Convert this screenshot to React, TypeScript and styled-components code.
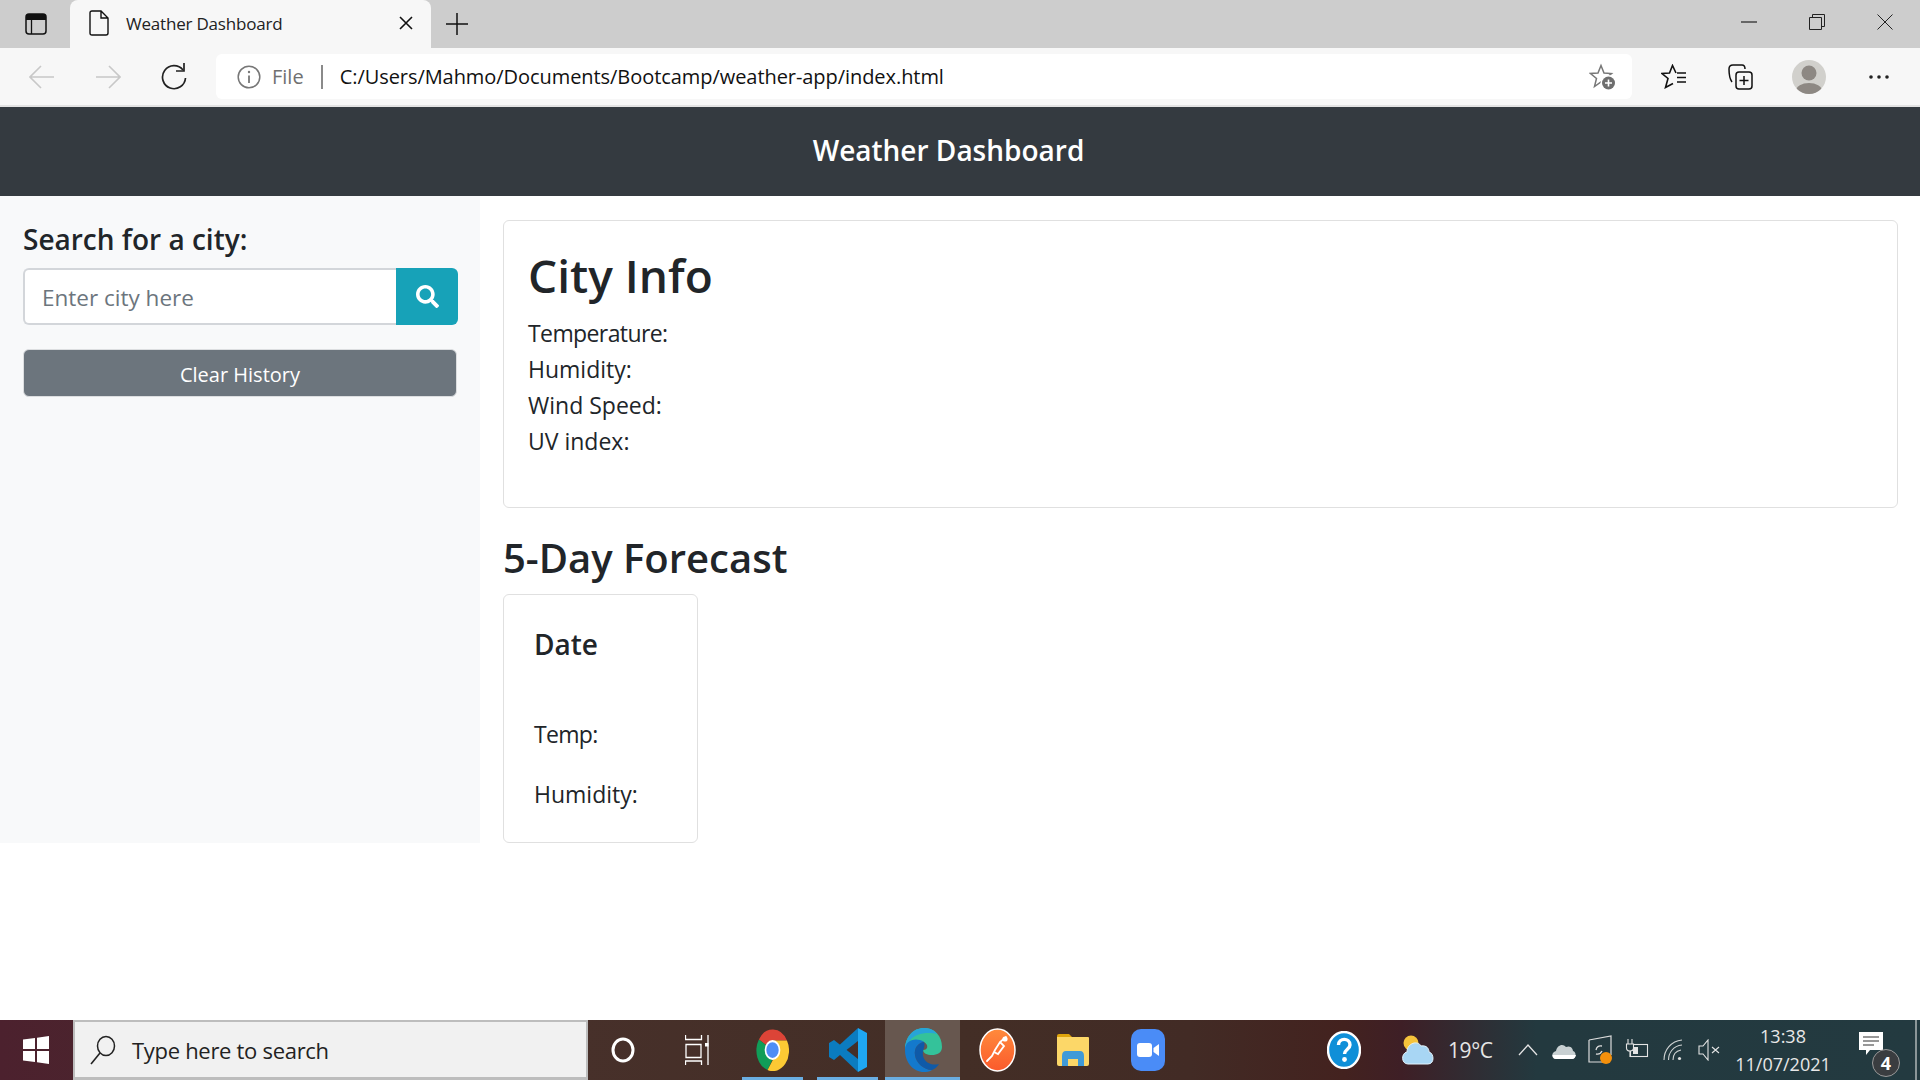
import React from "react";
import styled, { createGlobalStyle } from "styled-components";
import { FaSearch } from "react-icons/fa";

const GlobalStyle = createGlobalStyle`
    html, body {
        margin: 0;
        padding: 0;
        height: 100%;
        background: #fff;
    }
    * {
        box-sizing: border-box;
    }
`

const BODY_FONT = `"Open Sans", "Noto Sans", "Liberation Sans", sans-serif`;

const Page = styled.div`
    height: 100vh;
    display: flex;
    flex-direction: column;
    font-family: ${BODY_FONT};
    color: #212529;
    overflow: hidden;
`

const TabStrip = styled.div`
    height: 48px;
    background: #cdcdcd;
    display: flex;
    align-items: stretch;
`

const StripButton = styled.div<{ $width: number }>`
    width: ${p => p.$width}px;
    display: flex;
    align-items: center;
    justify-content: center;
    flex: none;
    padding-left: 2px;
`

const Tab = styled.div`
    width: 361px;
    background: #f7f7f7;
    border-radius: 8px 8px 0 0;
    display: flex;
    align-items: center;
    padding: 0 18px 2px 19px;
    font-size: 17px;
    color: #222;
`

const TabTitle = styled.span`
    margin-left: 17px;
    flex: 1;
    letter-spacing: -0.2px;
`

const WindowControls = styled.div`
    margin-left: auto;
    display: flex;
    height: 100%;
    padding-right: 1px;
`

const WindowButton = styled.div`
    width: 68px;
    display: flex;
    align-items: center;
    justify-content: center;
    padding-bottom: 5px;
`

const Toolbar = styled.div`
    height: 59px;
    background: #f7f7f7;
    border-bottom: 2px solid #e3e3e3;
    display: flex;
    align-items: center;
    padding: 0 8px 0 9px;
`

const NavButton = styled.div`
    width: 66px;
    display: flex;
    align-items: center;
    justify-content: center;
    flex: none;
`

const AddressBar = styled.div`
    flex: 1;
    height: 45px;
    margin: 0 8px 0 9px;
    background: #fff;
    border-radius: 6px;
    display: flex;
    align-items: center;
    padding: 0 15px 0 21px;
    font-size: 20px;
    color: #111;
`

const FileLabel = styled.span`
    color: #707070;
    margin-left: 11px;
`

const AddressDivider = styled.span`
    width: 2px;
    height: 24px;
    background: #8a8a8a;
    margin: 0 17px 0 17px;
`

const AddressUrl = styled.span`
    flex: 1;
    letter-spacing: -0.06px;
`

const ToolButton = styled.div<{ $width: number }>`
    width: ${p => p.$width}px;
    display: flex;
    align-items: center;
    justify-content: center;
    flex: none;
`

const Avatar = styled.div`
    width: 34px;
    height: 34px;
    border-radius: 50%;
    background: #d1d0cc;
    display: flex;
    align-items: center;
    justify-content: center;
    overflow: hidden;
`

const Header = styled.header`
    height: 89px;
    background: #343a40;
    color: #fff;
    display: flex;
    align-items: center;
    justify-content: center;
    font-size: 28px;
    font-weight: 600;
    flex: none;
    padding: 0 23px 3px 0;
`

const Main = styled.main`
    display: flex;
    height: 647px;
    flex: none;
`

const Sidebar = styled.aside`
    width: 480px;
    background: #f8f9fa;
    padding: 24px 22px 0 23px;
    flex: none;
`

const SearchTitle = styled.h2`
    margin: 0 0 10px;
    font-size: 28px;
    line-height: 38px;
    font-weight: 600;
`

const SearchGroup = styled.div`
    display: flex;
    height: 57px;
`

const CityInput = styled.input`
    flex: 1;
    min-width: 0;
    height: 57px;
    border: 2px solid #d3d6da;
    border-right: none;
    border-radius: 6px 0 0 6px;
    padding: 1px 17px 0;
    font-family: ${BODY_FONT};
    font-size: 22.5px;
    color: #212529;
    background: #fff;
    outline: none;
    &::placeholder {
        color: #6c757d;
        opacity: 1;
    }
`

const SearchButton = styled.div`
    width: 62px;
    background: #17a2b8;
    color: #fff;
    border-radius: 0 6px 6px 0;
    display: flex;
    align-items: center;
    justify-content: center;
    font-size: 23px;
`

const ClearButton = styled.div`
    margin-top: 24px;
    height: 48px;
    width: 434px;
    background: #6c757d;
    border: 1.5px solid #dcdee0;
    border-radius: 6px;
    color: #fff;
    display: flex;
    align-items: center;
    justify-content: center;
    font-size: 20px;
    padding-top: 2px;
`

const Content = styled.section`
    flex: 1;
    padding: 24px 22px 0 23px;
    display: flex;
    flex-direction: column;
`

const CityCard = styled.div`
    height: 288px;
    border: 1.5px solid #e0e0e0;
    border-radius: 6px;
    padding: 24px 24px 0;
`

const CityName = styled.h1`
    margin: 0 0 10px;
    font-size: 46px;
    line-height: 60px;
    font-weight: 600;
`

const InfoLine = styled.div<{ $tight?: boolean }>`
    font-size: 23px;
    line-height: 36px;
    letter-spacing: ${p => (p.$tight ? "-0.6px" : "0")};
`

const ForecastTitle = styled.h2`
    margin: 23px 0 9px;
    font-size: 40px;
    line-height: 54px;
    font-weight: 600;
`

const DayCard = styled.div`
    width: 195px;
    height: 249px;
    border: 1.5px solid #e0e0e0;
    border-radius: 6px;
    padding: 31px 30px 0;
`

const DayDate = styled.h4`
    margin: 0 0 54px;
    font-size: 28px;
    line-height: 36px;
    font-weight: 600;
`

const DayLine = styled.div<{ $tight?: boolean }>`
    font-size: 23px;
    line-height: 36px;
    margin-bottom: 24px;
    letter-spacing: ${p => (p.$tight ? "-0.7px" : "0")};
`

const Spacer = styled.div`
    flex: 1;
`

const Taskbar = styled.footer`
    height: 60px;
    flex: none;
    display: flex;
    align-items: stretch;
    color: #fff;
    background: linear-gradient(90deg, #4c212e 0%, #47302a 30%, #432e26 50%, #422b25 62%, #43221f 70%, #3e1f26 73%, #23393f 80%, #233a40 100%);
`

const StartCell = styled.div`
    width: 73px;
    display: flex;
    align-items: center;
    justify-content: center;
    padding-right: 2px;
`

const SearchBox = styled.div`
    width: 515px;
    background: #f1f1f1;
    border: 2px solid #bdbdbd;
    border-bottom-width: 3px;
    color: #222;
    display: flex;
    align-items: center;
    padding: 0 0 0 15px;
    font-size: 22px;
`

const SearchText = styled.span`
    margin-left: 16px;
    letter-spacing: -0.3px;
`

const TaskCell = styled.div<{ $width: number; $active?: boolean; $running?: boolean }>`
    width: ${p => p.$width}px;
    flex: none;
    position: relative;
    display: flex;
    align-items: center;
    justify-content: center;
    background: ${p => (p.$active ? "#67574f" : "transparent")};
    ${p => p.$running && `
        &::after {
            content: "";
            position: absolute;
            left: ${p.$active ? 0 : 7}px;
            right: ${p.$active ? 0 : 7}px;
            bottom: 0;
            height: 3px;
            background: #6aaee2;
        }
    `}
`

const Tray = styled.div`
    margin-left: auto;
    display: flex;
    align-items: stretch;
    padding-right: 17px;
    border-right: 3px solid transparent;
    position: relative;
    &::after {
        content: "";
        position: absolute;
        right: 0;
        top: 0;
        bottom: 0;
        width: 2px;
        background: #8b9698;
    }
`

const WeatherCell = styled.div`
    width: 125px;
    display: flex;
    align-items: center;
    padding-left: 17px;
    font-size: 21px;
    color: #e6e6e6;
`

const TempText = styled.span`
    margin-left: 14px;
    letter-spacing: -0.4px;
`

const Clock = styled.div`
    width: 114px;
    display: flex;
    flex-direction: column;
    align-items: center;
    justify-content: center;
    font-size: 18px;
    line-height: 28px;
    color: #e8e8e8;
`

const NoteBadge = styled.span`
    position: absolute;
    right: 0;
    bottom: 3px;
    width: 28px;
    height: 28px;
    border-radius: 50%;
    background: #3a3d40;
    border: 1.5px solid #9a9a9a;
    color: #fff;
    font-size: 18px;
    font-weight: 700;
    display: flex;
    align-items: center;
    justify-content: center;
`

const NoteCell = styled(TaskCell)`
    justify-content: flex-start;
    padding-left: 19px;
    padding-bottom: 8px;
`

const ChromeLogo = () => (
    <svg width="33" height="42" viewBox="0 0 40 40" preserveAspectRatio="none">
        <path d="M20 20 L3.5 10 A19.5 19.5 0 0 1 37.5 11 L20 11 Z" fill="#dc4437" />
        <path d="M20 20 L3.5 10 A19.5 19.5 0 0 0 14 39 L20 29 Z" fill="#109d58" />
        <path d="M20 11 L37.5 11 A19.5 19.5 0 0 1 14 39 L24 24 Z" fill="#fcc934" />
        <circle cx="20" cy="20" r="9.5" fill="#fff" />
        <circle cx="20" cy="20" r="7.5" fill="#4e8df5" />
    </svg>
)

const VsCodeLogo = () => (
    <svg width="38" height="44" viewBox="0 0 38 44">
        <path d="M0 15 L5 12 L29 31 V44 L11 27 L5 32 L0 29 Z" fill="#0b7cc0" />
        <path d="M29 0 V13 L11 27 L5 22 Z" fill="#0b7cc0" />
        <path d="M29 0 L38 5 V39 L29 44 Z" fill="#1fa7f2" />
    </svg>
)

const EdgeLogo = () => (
    <svg width="38" height="44" viewBox="0 0 38 44">
        <path d="M1 22 C1 9 9 0 20 0 C31 0 38 8 38 19 C38 25 33 27 28 27 C23 27 19 25 19 22 C24 22 25 17 20 14 C12 10 1 14 1 22 Z" fill="#34c29a" />
        <path d="M1 22 C1 9 9 0 20 0 C26 0 30 2 33 6 C26 4 10 4 5 14 Z" fill="#27a4d8" />
        <path d="M1 22 C1 12 12 9 20 14 C14 15 10 20 11 27 C12 35 20 42 28 42 C25 44 22 44 20 44 C9 44 1 34 1 22 Z" fill="#1479cc" />
        <path d="M20 14 C14 15 10 20 11 27 C12 35 20 42 28 42 C31 41 33 39 35 36 C28 38 21 35 19 28 C18 22 22 18 20 14 Z" fill="#0f5aa8" />
    </svg>
)

const PostmanLogo = () => (
    <svg width="37" height="44" viewBox="0 0 37 44">
        <defs>
            <linearGradient id="pm" x1="0" y1="0" x2="0" y2="1">
                <stop offset="0" stopColor="#ff8a3c" />
                <stop offset="1" stopColor="#fb5a2c" />
            </linearGradient>
        </defs>
        <ellipse cx="18.5" cy="22" rx="17.5" ry="21" fill="url(#pm)" stroke="#fff" strokeWidth="1.5" />
        <path d="M27 9 L21 14 L16 22 L13 28 L8 33 M21 14 L25 18 L19 26 L15 24" fill="none" stroke="#fff" strokeWidth="1.8" strokeLinecap="round" />
        <circle cx="26" cy="11" r="2.6" fill="#fff" />
    </svg>
)

const FolderIcon = () => (
    <svg width="32" height="32" viewBox="0 0 32 32">
        <path d="M0 2 Q0 0 2 0 H12 L15 3 V7 H0 Z" fill="#dfa40b" />
        <path d="M0 3 H31 Q32 3 32 4 V30 Q32 32 30 32 H2 Q0 32 0 30 Z" fill="#fcd768" />
        <path d="M5 32 V22 Q5 17 9 17 H23 Q27 17 27 22 V32 H21 V25 H11 V32 Z" fill="#3f9ad8" />
    </svg>
)

const ZoomIcon = () => (
    <svg width="34" height="42" viewBox="0 0 34 42">
        <rect x="0" y="0" width="34" height="42" rx="10" fill="#4a8cf7" />
        <rect x="6" y="14" width="15" height="14" rx="3" fill="#fff" />
        <path d="M22.5 19 L28 15 V27 L22.5 23 Z" fill="#fff" />
    </svg>
)

const HelpIcon = () => (
    <svg width="34" height="38" viewBox="0 0 34 38">
        <ellipse cx="17" cy="19" rx="16" ry="18" fill="#0f8fd8" stroke="#fff" strokeWidth="2.4" />
        <path d="M11.5 14 C11.5 6.5 23 6.5 23 14 C23 18 17.5 18.5 17.5 23" fill="none" stroke="#fff" strokeWidth="3.4" />
        <circle cx="17.5" cy="28.5" r="2.4" fill="#fff" />
    </svg>
)

const WeatherIcon = () => (
    <svg width="32" height="30" viewBox="0 0 32 30">
        <circle cx="9" cy="8" r="7.5" fill="#f5c33b" />
        <path d="M6 29 C-1 29 -1 18 5 17 C5 8 16 5 19 11 C25 10 27 14 27 17 C32 18 33 29 26 29 Z" fill="#a8d6f4" stroke="#e4f3fc" strokeWidth="1" />
    </svg>
)

const Star = "M11 1.5 L14 9 L21.5 9.5 L15.5 14.5 L17.5 22 L11 18 L4.5 22.5 L6.5 14.5 L0.5 9.5 L8 9 Z";

export default function App() {
    return (
        <Page>
            <GlobalStyle />
            <TabStrip>
                <StripButton $width={70}>
                    <svg width="22" height="22" viewBox="0 0 22 22">
                        <rect x="1" y="1" width="20" height="20" rx="3" fill="none" stroke="#111" strokeWidth="1.5" />
                        <path d="M1 4 Q1 1 4 1 H18 Q21 1 21 4 V7 H1 Z" fill="#111" />
                        <path d="M6.5 7 V21" stroke="#111" strokeWidth="1.3" />
                    </svg>
                </StripButton>
                <Tab>
                    <svg width="20" height="26" viewBox="0 0 20 26">
                        <path d="M3 1 H12 L19 8 V23 Q19 25 17 25 H3 Q1 25 1 23 V3 Q1 1 3 1 Z M12 1 V8 H19" fill="none" stroke="#111" strokeWidth="1.4" />
                    </svg>
                    <TabTitle>Weather Dashboard</TabTitle>
                    <svg width="14" height="14" viewBox="0 0 14 14">
                        <path d="M1 1 L13 13 M13 1 L1 13" stroke="#111" strokeWidth="1.6" />
                    </svg>
                </Tab>
                <StripButton $width={50}>
                    <svg width="22" height="22" viewBox="0 0 22 22">
                        <path d="M11 0 V22 M0 11 H22" stroke="#111" strokeWidth="1.5" />
                    </svg>
                </StripButton>
                <WindowControls>
                    <WindowButton>
                        <svg width="16" height="2" viewBox="0 0 16 2"><path d="M0 1 H16" stroke="#222" strokeWidth="1.2" /></svg>
                    </WindowButton>
                    <WindowButton>
                        <svg width="16" height="16" viewBox="0 0 16 16">
                            <path d="M0.5 3.5 H12.5 V15.5 H0.5 Z M3.5 3.5 V0.5 H15.5 V12.5 H12.5" fill="none" stroke="#222" strokeWidth="1" />
                        </svg>
                    </WindowButton>
                    <WindowButton>
                        <svg width="16" height="16" viewBox="0 0 16 16"><path d="M0.5 0.5 L15.5 15.5 M15.5 0.5 L0.5 15.5" stroke="#222" strokeWidth="1" /></svg>
                    </WindowButton>
                </WindowControls>
            </TabStrip>
            <Toolbar>
                <NavButton>
                    <svg width="26" height="24" viewBox="0 0 26 24"><path d="M25 12 H1 M12 1 L1 12 L12 23" fill="none" stroke="#c8c8c8" strokeWidth="1.6" /></svg>
                </NavButton>
                <NavButton>
                    <svg width="26" height="24" viewBox="0 0 26 24"><path d="M1 12 H25 M14 1 L25 12 L14 23" fill="none" stroke="#c8c8c8" strokeWidth="1.6" /></svg>
                </NavButton>
                <NavButton>
                    <svg width="26" height="28" viewBox="0 0 26 28">
                        <path d="M22 7 A11.5 11.5 0 1 0 24.5 15" fill="none" stroke="#222" strokeWidth="1.7" />
                        <path d="M23 0 V8 H15" fill="none" stroke="#222" strokeWidth="1.7" />
                    </svg>
                </NavButton>
                <AddressBar>
                    <svg width="24" height="24" viewBox="0 0 24 24">
                        <circle cx="12" cy="12" r="10.8" fill="none" stroke="#777" strokeWidth="1.5" />
                        <path d="M12 10.5 V18" stroke="#777" strokeWidth="1.8" />
                        <circle cx="12" cy="7" r="1.2" fill="#777" />
                    </svg>
                    <FileLabel>File</FileLabel>
                    <AddressDivider />
                    <AddressUrl>C:/Users/Mahmo/Documents/Bootcamp/weather-app/index.html</AddressUrl>
                    <svg width="28" height="28" viewBox="0 0 28 28">
                        <path d={Star} fill="none" stroke="#777" strokeWidth="1.5" transform="translate(1 1)" />
                        <circle cx="19.5" cy="20" r="8" fill="#fff" />
                        <circle cx="19.5" cy="20" r="6.5" fill="#6e6e6e" />
                        <path d="M19.5 16.5 V23.5 M16 20 H23" stroke="#fff" strokeWidth="1.6" />
                    </svg>
                </AddressBar>
                <ToolButton $width={68}>
                    <svg width="26" height="25" viewBox="0 0 26 25">
                        <path d="M15 9 L11.5 1.5 L8.5 9 L1 9.5 L7 14.5 L4.5 23.5 L12 19.5" fill="none" stroke="#111" strokeWidth="1.6" />
                        <path d="M16 9 H25 M16 13.5 H25 M16 18 H25" stroke="#111" strokeWidth="1.6" />
                    </svg>
                </ToolButton>
                <ToolButton $width={64}>
                    <svg width="25" height="26" viewBox="0 0 25 26">
                        <path d="M4 18 Q1 14 1 5 Q1 1 5 1 L14 1 Q17 1 17 5" fill="none" stroke="#111" strokeWidth="1.5" />
                        <rect x="8" y="8" width="16" height="17" rx="3" fill="none" stroke="#111" strokeWidth="1.5" />
                        <path d="M16 12 V21 M11.5 16.5 H20.5" stroke="#111" strokeWidth="1.5" />
                    </svg>
                </ToolButton>
                <ToolButton $width={74}>
                    <Avatar>
                        <svg width="34" height="34" viewBox="0 0 34 34">
                            <circle cx="17" cy="13" r="7.5" fill="#8d8883" />
                            <ellipse cx="17" cy="31" rx="13" ry="8" fill="#8d8883" />
                        </svg>
                    </Avatar>
                </ToolButton>
                <ToolButton $width={66}>
                    <svg width="20" height="4" viewBox="0 0 20 4">
                        <circle cx="2" cy="2" r="1.8" fill="#222" />
                        <circle cx="10" cy="2" r="1.8" fill="#222" />
                        <circle cx="18" cy="2" r="1.8" fill="#222" />
                    </svg>
                </ToolButton>
            </Toolbar>
            <Header>Weather Dashboard</Header>
            <Main>
                <Sidebar>
                    <SearchTitle>Search for a city:</SearchTitle>
                    <SearchGroup>
                        <CityInput placeholder="Enter city here" />
                        <SearchButton><FaSearch /></SearchButton>
                    </SearchGroup>
                    <ClearButton>Clear History</ClearButton>
                </Sidebar>
                <Content>
                    <CityCard>
                        <CityName>City Info</CityName>
                        <InfoLine $tight>Temperature:</InfoLine>
                        <InfoLine>Humidity:</InfoLine>
                        <InfoLine>Wind Speed:</InfoLine>
                        <InfoLine>UV index:</InfoLine>
                    </CityCard>
                    <ForecastTitle>5-Day Forecast</ForecastTitle>
                    <DayCard>
                        <DayDate>Date</DayDate>
                        <DayLine $tight>Temp:</DayLine>
                        <DayLine>Humidity:</DayLine>
                    </DayCard>
                </Content>
            </Main>
            <Spacer />
            <Taskbar>
                <StartCell>
                    <svg width="26" height="30" viewBox="0 0 26 30">
                        <path d="M0 4.5 L12 3 V14 H0 Z M14 2.7 L26 1 V14 H14 Z M0 16 H12 V27 L0 25.5 Z M14 16 H26 V29 L14 27.3 Z" fill="#fff" />
                    </svg>
                </StartCell>
                <SearchBox>
                    <svg width="26" height="30" viewBox="0 0 26 30">
                        <ellipse cx="16" cy="11" rx="8.5" ry="9.5" fill="none" stroke="#222" strokeWidth="1.5" />
                        <path d="M10 18 L1 29" stroke="#222" strokeWidth="1.6" />
                    </svg>
                    <SearchText>Type here to search</SearchText>
                </SearchBox>
                <TaskCell $width={70}>
                    <svg width="24" height="26" viewBox="0 0 24 26">
                        <ellipse cx="12" cy="13" rx="10" ry="11" fill="none" stroke="#fff" strokeWidth="3" />
                    </svg>
                </TaskCell>
                <TaskCell $width={77}>
                    <svg width="24" height="30" viewBox="0 0 24 30">
                        <path d="M0.5 0 V4.5 H16.5 V0 M1 9.5 H16 V22.5 H1 Z M0.5 30 V26 H16.5 V30 M23 0 V30" fill="none" stroke="#fff" strokeWidth="1.3" />
                        <rect x="20" y="8" width="3.5" height="3.5" fill="#fff" />
                    </svg>
                </TaskCell>
                <TaskCell $width={75} $running><ChromeLogo /></TaskCell>
                <TaskCell $width={75} $running><VsCodeLogo /></TaskCell>
                <TaskCell $width={75} $running $active><EdgeLogo /></TaskCell>
                <TaskCell $width={75}><PostmanLogo /></TaskCell>
                <TaskCell $width={75}><FolderIcon /></TaskCell>
                <TaskCell $width={75}><ZoomIcon /></TaskCell>
                <Tray>
                    <TaskCell $width={82}><HelpIcon /></TaskCell>
                    <WeatherCell>
                        <WeatherIcon />
                        <TempText>19°C</TempText>
                    </WeatherCell>
                    <TaskCell $width={36}>
                        <svg width="20" height="12" viewBox="0 0 20 12"><path d="M1 11 L10 1 L19 11" fill="none" stroke="#e4e4e4" strokeWidth="1.3" /></svg>
                    </TaskCell>
                    <TaskCell $width={36}>
                        <svg width="24" height="20" viewBox="0 0 24 20">
                            <path d="M4 19 C-1 19 -1 12 4 11 C5 5 11 3 14 7 C19 5 21 9 21 11 C25 12 24 19 20 19 Z" fill="#c8d0d2" />
                            <path d="M0.5 15 H24 Q23 19 20 19 H4 Q1 19 0.5 15 Z" fill="#fff" />
                        </svg>
                    </TaskCell>
                    <TaskCell $width={36}>
                        <svg width="24" height="30" viewBox="0 0 24 30">
                            <path d="M1 5 L23 1 V20 M16 27 L1 27 V5" fill="none" stroke="#ddd" strokeWidth="1.2" />
                            <path d="M8 15 Q9 10 14 11 M14 16 Q12 20 8 19" fill="none" stroke="#ddd" strokeWidth="1.3" />
                            <circle cx="18" cy="23" r="6" fill="#f4900c" />
                        </svg>
                    </TaskCell>
                    <TaskCell $width={37}>
                        <svg width="24" height="22" viewBox="0 0 24 22">
                            <rect x="5.5" y="5.5" width="17" height="12" fill="none" stroke="#e4e4e4" strokeWidth="1.1" />
                            <rect x="8" y="8" width="5" height="7" fill="#e4e4e4" />
                            <path d="M3 0 V5 M7 0 V5 M1.5 5 H8.5 V9 Q8.5 12 5 12 Q1.5 12 1.5 9 Z M5 12 V18" fill="#23393f" stroke="#e4e4e4" strokeWidth="1.1" />
                        </svg>
                    </TaskCell>
                    <TaskCell $width={36}>
                        <svg width="20" height="22" viewBox="0 0 20 22">
                            <path d="M1 21 C1 11 8 2 19 1 M5.5 21 C5.5 14 10 7 19 6 M10 21 C10 16 13 12 18 11" fill="none" stroke="#d0d4d4" strokeWidth="1.1" />
                            <circle cx="16.5" cy="19.5" r="1.6" fill="#e4e4e4" />
                        </svg>
                    </TaskCell>
                    <TaskCell $width={35}>
                        <svg width="22" height="22" viewBox="0 0 22 22">
                            <path d="M1 7 H5 L10 1 V21 L5 15 H1 Z" fill="none" stroke="#e4e4e4" strokeWidth="1.1" />
                            <path d="M14 8 L21 14 M21 8 L14 14" stroke="#e4e4e4" strokeWidth="1.1" />
                        </svg>
                    </TaskCell>
                    <Clock>
                        <span>13:38</span>
                        <span>11/07/2021</span>
                    </Clock>
                    <NoteCell $width={60}>
                        <svg width="24" height="28" viewBox="0 0 24 28">
                            <path d="M0 0 H24 V18 H11 L7 23 V18 H0 Z" fill="#fff" />
                            <path d="M4 5 H20 M4 9 H20 M4 13 H15" stroke="#333" strokeWidth="1.2" />
                        </svg>
                        <NoteBadge>4</NoteBadge>
                    </NoteCell>
                </Tray>
            </Taskbar>
        </Page>
    );
}
